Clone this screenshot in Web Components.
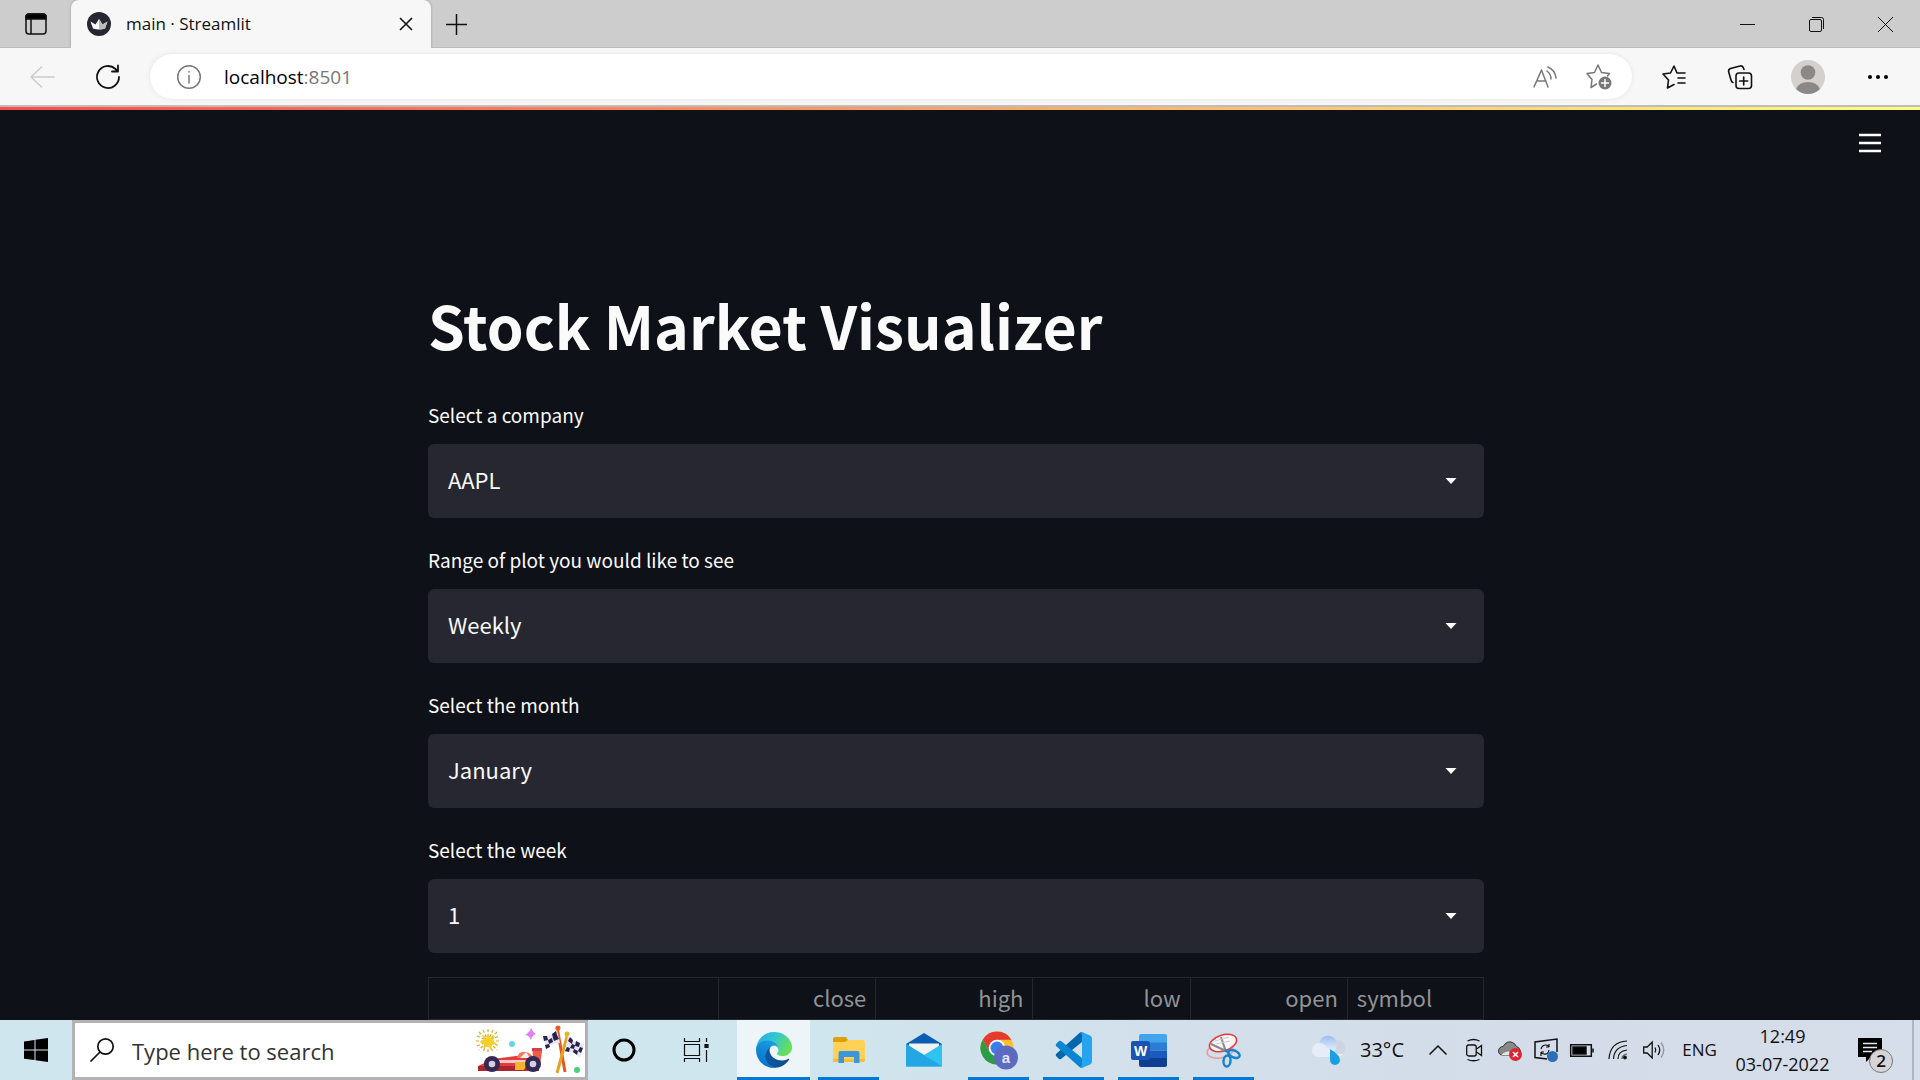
<!DOCTYPE html>
<html lang="en">
<head>
<meta charset="utf-8">
<title>main · Streamlit</title>
<style>
  html, body { margin: 0; height: 100%; }
  body { display: flex; flex-direction: column; overflow: hidden; background: #0e1117; font-family: "Open Sans", "Noto Sans", sans-serif; }
</style>
</head>
<body>
<tab-strip></tab-strip>
<address-toolbar></address-toolbar>
<streamlit-app>
  <h1>Stock Market Visualizer</h1>
  <select-box label="Select a company" options="AAPL,GOOG,MSFT"></select-box>
  <select-box label="Range of plot you would like to see" options="Weekly,Monthly,Yearly"></select-box>
  <select-box label="Select the month" options="January,February,March"></select-box>
  <select-box label="Select the week" options="1,2,3,4"></select-box>
  <price-table></price-table>
</streamlit-app>
<task-bar></task-bar>

<script>
const define = (name, html, setup) => {
  const template = document.createElement('template');
  template.innerHTML = html;
  customElements.define(name, class extends HTMLElement {
    constructor() {
      super();
      this.attachShadow({ mode: 'open' }).append(template.content.cloneNode(true));
    }
    connectedCallback() { if (setup) setup(this, this.shadowRoot); }
  });
};

define('tab-strip', `
<style>
  :host { display: flex; height: 48px; flex: none; background: #cdcdcd; color: #111; box-shadow: inset 0 -1px #bdbdbd; }
  button { border: 0; background: none; padding: 0; color: inherit; display: grid; place-items: center; }
  svg { display: block; fill: none; stroke: currentColor; overflow: visible; }
  svg.solid { stroke: none; }
  .menu { width: 71px; }
  .tab { position: relative; box-sizing: border-box; width: 360px; padding: 0 18px 0 16px; display: flex; align-items: center; gap: 15px; background: #f7f7f7; border-radius: 8px 8px 0 0; box-shadow: 0 0 3px #9a9a9a; clip-path: inset(0 -4px 0 -4px); }
  .title { flex: 1; font-size: 17px; line-height: 24px; }
  .add { width: 50px; }
  .controls { margin-left: auto; display: flex; }
  .controls button { width: 69px; }
</style>
<button class="menu" aria-label="Tab actions"><svg width="22" height="22" viewBox="0 0 22 22" stroke-width="1.5"><rect x="1" y="1" width="20" height="20" rx="3"/><path d="M1 5V4a3 3 0 0 1 3-3h14a3 3 0 0 1 3 3v2H1z" fill="#000"/><path d="M6 6v15"/></svg></button>
<div class="tab">
  <svg class="solid" width="24" height="24" viewBox="0 0 24 24"><circle cx="12" cy="12" r="12" fill="#262730"/><path d="M3.500 9.500l5 3 3.500-5.500 3.500 5.500 5-3-2.500 7q-6 2-12 0z" fill="#fff"/><path d="M12 7l3.500 5.500 5-3-2.500 7q-3 1-6 1z" fill="#bbb"/></svg>
  <span class="title">main · Streamlit</span>
  <button aria-label="Close tab"><svg width="14" height="14" viewBox="0 0 14 14" stroke-width="1.6"><path d="M1 1l12 12M13 1L1 13"/></svg></button>
</div>
<button class="add" aria-label="New tab"><svg width="21" height="21" viewBox="0 0 21 21" stroke-width="1.5"><path d="M10.500 0v21M0 10.500h21"/></svg></button>
<div class="controls">
  <button aria-label="Minimize"><svg width="15" height="15" viewBox="0 0 15 15"><path d="M0 7.500h15"/></svg></button>
  <button aria-label="Restore"><svg width="15" height="15" viewBox="0 0 15 15"><rect x=".5" y="2.500" width="12" height="12" rx="1.500"/><path d="M3 .5h9.500a2 2 0 0 1 2 2V12"/></svg></button>
  <button aria-label="Close"><svg width="15" height="15" viewBox="0 0 15 15"><path d="M0 0l15 15M15 0L0 15"/></svg></button>
</div>`);

define('address-toolbar', `
<style>
  :host { display: flex; align-items: center; height: 57px; flex: none; background: #f7f7f7; border-bottom: 2px solid #bdbdbd; color: #111; }
  button { border: 0; background: none; padding: 0; color: inherit; display: grid; place-items: center; width: 66px; }
  svg { display: block; fill: none; stroke: currentColor; overflow: visible; stroke-linecap: round; stroke-linejoin: round; }
  svg.solid { stroke: none; }
  .nav { display: flex; width: 150px; padding-left: 9px; box-sizing: border-box; }
  .nav button:first-child { color: #ccc; }
  .address { flex: 1; height: 45px; box-sizing: border-box; display: flex; align-items: center; padding: 0 20px 0 27px; border-radius: 23px; background: #fff; box-shadow: 0 0 5px #e3e3e3; color: #777; font-size: 19px; line-height: 26px; }
  .address button { width: 24px; margin-right: 23px; }
  .address .end { width: 26px; margin: 0 0 0 28px; }
  input { border: 0; padding: 0; margin: 0; outline: 0; background: none; font: inherit; color: #000; field-sizing: content; }
  .port { flex: 1; }
  .tools { display: flex; padding: 0 7px 0 9px; }
  .tools .wide { width: 70px; }
</style>
<div class="nav">
  <button aria-label="Back"><svg width="24" height="22" viewBox="0 0 24 22" stroke-width="1.500"><path d="M24 11H1M11.500 1L1 11l10.500 10"/></svg></button>
  <button aria-label="Refresh"><svg width="24" height="24" viewBox="0 0 24 24" stroke-width="1.800"><path d="M23 12a11 11 0 1 1-3.500-8L22 6.500M22 .5v6h-6"/></svg></button>
</div>
<div class="address">
  <button aria-label="Site information"><svg width="24" height="24" viewBox="0 0 24 24" stroke-width="1.500"><circle cx="12" cy="12" r="11.300"/><path d="M12 10.500V18M12 6.500v.5"/></svg></button>
  <input aria-label="Address" value="localhost" size="9"><span class="port">:8501</span>
  <button class="end" aria-label="Read aloud"><svg width="24" height="22" viewBox="0 0 24 22" stroke-width="1.500"><path d="M1 21L8.500 4 15 21M4 15h9M14 5q4 3 4 8M15 1q7 3 8 11"/></svg></button>
  <button class="end" aria-label="Add to favorites"><svg width="26" height="26" viewBox="0 0 26 26" stroke-width="1.500"><path d="M10.500 20L5 23.500l1-8L1 9.500l7.500-1L12 1l3.500 7.500 8 1-2 2.500"/><circle cx="19" cy="19" r="6.500" fill="#777" stroke="none"/><path d="M19 15.500v7M15.500 19h7" stroke="#fff"/></svg></button>
</div>
<div class="tools">
  <button aria-label="Favorites"><svg width="24" height="24" viewBox="0 0 24 24" stroke-width="1.600"><path d="M12 19.500L5.500 23l1-8L1 9l7.500-1L12 1l3 7h8M16 13h7M16 18h7"/></svg></button>
  <button aria-label="Collections"><svg width="24" height="24" viewBox="0 0 24 24" stroke-width="1.600"><rect x="8" y="8" width="15.500" height="15.500" rx="3"/><path d="M15.700 12v8M11.700 16h8M5 17.500Q3.500 17 3 15L.7 7Q0 4.500 2.500 3.500L12 1q2.500-.8 3.500 2l.5 1.500"/></svg></button>
  <button class="wide" aria-label="Profile"><svg class="solid" width="34" height="34" viewBox="0 0 34 34"><circle cx="17" cy="17" r="17" fill="#d3d1ce"/><circle cx="17" cy="12.500" r="7.300" fill="#8c8885"/><path d="M5 29q3-7 12-7t12 7q-5 5-12 5T5 29z" fill="#8c8885"/></svg></button>
  <button class="wide" aria-label="More"><svg class="solid" width="20" height="4" viewBox="0 0 20 4"><g fill="#000"><circle cx="2" cy="2" r="2"/><circle cx="10" cy="2" r="2"/><circle cx="18" cy="2" r="2"/></g></svg></button>
</div>`);

define('streamlit-app', `
<style>
  :host { display: flex; flex-direction: column; flex: 1; min-height: 0; overflow: hidden; background: #0e1117; color: #fafafa; font-family: "Noto Sans CJK JP", "Noto Sans CJK SC", sans-serif; }
  .decoration { height: 3px; flex: none; background: linear-gradient(90deg, #ff4b4b, #fffd80); }
  header { display: flex; justify-content: flex-end; padding: 20px 36px 0 0; height: 170px; flex: none; box-sizing: border-box; }
  button { border: 0; background: none; padding: 0; width: 28px; height: 26px; display: grid; place-items: center; }
  svg { display: block; fill: none; stroke: #fff; stroke-width: 2.500; }
  main { width: 55%; margin: 0 auto; padding-right: 8px; display: flex; flex-direction: column; gap: 24px; }
  ::slotted(h1) { margin: 0 0 3px; font-size: 59px; line-height: 90px; font-weight: 700; }
</style>
<div class="decoration"></div>
<header><button aria-label="Main menu"><svg width="22" height="20" viewBox="0 0 22 20"><path d="M0 2h22M0 10h22M0 18h22"/></svg></button></header>
<main><slot></slot></main>`);

define('select-box', `
<style>
  :host { display: block; padding-top: 3px; }
  label { display: block; font-size: 19px; line-height: 30px; margin-bottom: 14px; }
  .field { display: grid; align-items: center; }
  select, svg { grid-area: 1 / 1; }
  select { appearance: none; width: 100%; height: 74px; padding: 0 20px 4px; border: 0; border-radius: 6px; background: #262730; color: #fafafa; font: inherit; font-size: 22px; }
  svg { justify-self: end; margin-right: 27px; pointer-events: none; fill: #fff; }
</style>
<label for="choice"></label>
<div class="field"><select id="choice"></select><svg width="12" height="6" viewBox="0 0 12 6"><path d="M.5 0h11L6 6z"/></svg></div>`,
(host, root) => {
  root.querySelector('label').textContent = host.getAttribute('label');
  root.querySelector('select').replaceChildren(...host.getAttribute('options').split(',').map(o => new Option(o)));
});

define('price-table', `
<style>
  :host { display: block; }
  table { width: 100%; border-collapse: collapse; table-layout: fixed; font-size: 22px; line-height: 32px; color: #929396; }
  th { font-weight: 400; text-align: right; padding: 3px 9px 6px; border: 1px solid #26272d; }
  th.text { text-align: left; }
  col { width: 14.9%; }
  col.index { width: 27.5%; }
  col.symbol { width: 12.9%; }
</style>
<table>
  <colgroup><col class="index"><col><col><col><col><col class="symbol"></colgroup>
  <thead><tr><th></th><th scope="col">close</th><th scope="col">high</th><th scope="col">low</th><th scope="col">open</th><th scope="col" class="text">symbol</th></tr></thead>
</table>`);

define('task-button', `
<style>
  :host { display: block; width: 73px; }
  button { position: relative; width: 100%; height: 100%; border: 0; padding: 0; background: none; display: grid; place-items: center; }
  :host([active]) button { background: #edf5f9; }
  :host([open]) button::after { content: ""; position: absolute; left: 6px; right: 6px; bottom: 0; height: 3px; background: #0078d7; }
  :host([active]) button::after { left: 0; right: 0; }
</style>
<button><slot></slot></button>`,
(host, root) => root.querySelector('button').setAttribute('aria-label', host.getAttribute('label')));

define('task-bar', `
<style>
  :host { display: flex; height: 60px; flex: none; background: linear-gradient(90deg, #cfe6ee, #cfe6ee 40%, #d2e0ec 60%, #d4dce9 80%, #d6deea); color: #111; font-size: 17px; line-height: 28px; }
  svg { display: block; overflow: visible; }
  .line { fill: none; stroke: #111; stroke-width: 1.500; }
  button { border: 0; background: none; padding: 0; font: inherit; color: inherit; }
  task-button.small { width: 72px; }
  .search { box-sizing: border-box; width: 516px; border: 3px solid #b3b1b3; background: #fff; display: flex; align-items: center; padding: 0 0 0 15px; gap: 18px; }
  .search input { flex: 1; min-width: 0; border: 0; outline: 0; padding: 2px 0 0; background: none; font: inherit; font-size: 22px; }
  .search input::placeholder { color: #333; opacity: 1; }
  .apps { display: flex; gap: 2px; margin-left: 5px; }
  .tray { margin-left: auto; display: flex; }
  .weather { display: flex; align-items: center; gap: 14px; width: 108px; font-size: 20px; }
  .cell { width: 36px; display: grid; place-items: center; }
  .lang { width: 55px; }
  .clock { width: 111px; text-align: center; font-size: 18px; }
  .notes { width: 74px; padding-left: 20px; position: relative; display: grid; align-items: center; }
  .badge { position: absolute; left: 31px; top: 29px; width: 24px; height: 24px; box-sizing: border-box; border: 1px solid #777; border-radius: 50%; background: #d5d5d9; font-size: 17px; line-height: 22px; font-weight: 600; text-align: center; }
  .desktop { width: 8px; box-sizing: border-box; border-left: 2px solid #adb4c2; }
</style>
<task-button class="small" label="Start"><svg width="24" height="24" viewBox="0 0 24 24"><path d="M0 3.500L10.500 2v9.500H0zM11.500 1.800L24 0v11.500H11.500zM0 12.500h10.500V22L0 20.700zM11.500 12.500H24V24l-12.500-1.800z"/></svg></task-button>
<div class="search">
  <svg class="line" width="24" height="24" viewBox="0 0 24 24" style="stroke-width:1.700"><circle cx="15.500" cy="8.500" r="7.700"/><path d="M10 14L.5 23.500"/></svg>
  <input aria-label="Search" placeholder="Type here to search">
  <svg width="108" height="52" viewBox="0 0 108 52">
    <g stroke="#e0a81c" stroke-width="1.200" stroke-dasharray="3 2"><path d="M11 5v24M-1 17h24M2 8l18 18M20 8L2 26M6 6l10 22M16 6L6 28M0 12l22 10M0 22l22-10"/></g>
    <path d="M11 9l2 5 5-2-2 5 4 3-5 1-1 5-3-4-5 3 1-5-5-2 5-2-2-5 5 3z" fill="#f6cf2c"/>
    <path d="M54 4q1.500 4 5 6-4 1-5 6-2-5-6-5 5-3 6-7z" fill="#e27df5"/><circle cx="35" cy="20" r="3" fill="#64d5e8"/>
    <path d="M1 47V42l15-7 23-3h23v15z" fill="#e23c3c"/><path d="M1 42h61v5H1z" fill="#a92630"/><path d="M20 36h36v3H20z" fill="#f8c9ca"/><path d="M38 38h13l-4 8h-9z" fill="#f2b52d"/><path d="M40 34q2-9 12-5l6 5z" fill="#f47763"/><path d="M43 34l6-6 4 6z" fill="#eee"/><path d="M55 24h10v4l-2 12h-6z" fill="#ef5b47"/><path d="M55 24h10v3H55z" fill="#c8434a"/>
    <g fill="#332952"><circle cx="15" cy="40" r="8"/><circle cx="56" cy="40" r="8"/></g><g fill="#d7cfe6"><circle cx="15" cy="40" r="3.300"/><circle cx="56" cy="40" r="3.300"/></g>
    <path d="M80 3l8 45" stroke="#e9551e" stroke-width="3"/><path d="M91 9L80 49" stroke="#dda52b" stroke-width="3"/><circle cx="81" cy="4" r="2.500" fill="#ee5b22"/><circle cx="90" cy="10" r="2.500" fill="#e3b622"/>
    <path d="M66 12q6 2 14-6l3 13q-7-1-14 6z" fill="#e8e6f1"/><path d="M91 11q4 8 16 9l-4 14q-5-7-15-6z" fill="#e8e6f1"/>
    <g fill="#28234e"><path d="M66 12l4 0 1 4-4 1zM75 10l4-3 1 4-4 3zM71 16l4-2 1 4-4 2zM68 21l4-1 1 3-4 2zM80 11l2 4-5 2-1-3zM93 13l3 3-1 4-4-3zM99 17l4 2-1 4-4-1zM95 20l3 1-1 4-4-1zM90 23l3 1-1 4-4-1zM97 25l4 2-1 4-4-3zM103 23l3 1-2 5-3-2z"/></g><circle cx="100" cy="46" r="3" fill="#48d17b"/>
  </svg>
</div>
<task-button class="small" label="Cortana"><svg width="24" height="24" viewBox="0 0 24 24" fill="none" stroke="#000" stroke-width="3"><circle cx="12" cy="12" r="10"/></svg></task-button>
<task-button class="small" label="Task View"><svg class="line" width="24" height="24" viewBox="0 0 24 24" style="stroke-width:1.200"><path d="M.5 0v3.500h15V0M.5 24v-3.500h15V24M.5 6.500h15v11H.5zM22.500 0v4M22.500 12v12"/><path d="M21 6.500h3v3h-3z" fill="#111"/></svg></task-button>
<div class="apps">
  <task-button active open label="Edge"><svg width="36" height="36" viewBox="4.600 4.800 256 256">
    <defs><linearGradient id="e1" x2="1" y2="0"><stop offset="0" stop-color="#0c59a4"/><stop offset="1" stop-color="#114a8b"/></linearGradient><linearGradient id="e2" x1=".6" x2=".2" y2="1"><stop offset="0" stop-color="#1b9de2"/><stop offset="1" stop-color="#0370c9"/></linearGradient><linearGradient id="e3" x2="1" y2=".4"><stop offset="0" stop-color="#2ba9df"/><stop offset=".5" stop-color="#2fc4d8"/><stop offset="1" stop-color="#66df5e"/></linearGradient></defs>
    <path fill="url(#e1)" d="M235.680 195.470a93.730 93.730 0 0 1-10.540 4.710 101.870 101.870 0 0 1-35.900 6.460c-47.320 0-88.540-32.550-88.540-74.320A31.480 31.480 0 0 1 117.130 105c-42.800 1.800-53.800 46.400-53.800 72.530 0 73.880 68.090 81.370 82.760 81.370 7.910 0 19.840-2.300 27-4.560l1.310-.44a128.340 128.340 0 0 0 66.600-52.800 4 4 0 0 0-5.320-5.630z"/>
    <path fill="url(#e2)" d="M110.340 246.340A79.200 79.200 0 0 1 87.600 225a80.720 80.720 0 0 1 29.530-120c3.120-1.470 8.450-4.130 15.540-4a32.350 32.350 0 0 1 25.690 13 31.880 31.880 0 0 1 6.360 18.660c0-.21 24.460-79.600-80-79.600-43.900 0-80 41.660-80 78.210a130.150 130.150 0 0 0 12.110 56 128 128 0 0 0 156.380 67.110 75.550 75.550 0 0 1-62.780-8z"/>
    <path fill="url(#e3)" d="M156.940 153.780c-.81 1.050-3.300 2.500-3.300 5.660 0 2.610 1.700 5.120 4.720 7.230 14.380 10 41.490 8.680 41.560 8.680a59.560 59.560 0 0 0 30.270-8.350A61.380 61.380 0 0 0 260.600 114c.26-22.410-8-37.310-11.340-43.910-21.190-41.450-66.930-65.290-116.670-65.290a128 128 0 0 0-128 126.200c.48-36.540 36.800-66.050 80-66.050 3.500 0 23.460.34 42 10.070 16.340 8.580 24.900 18.940 30.850 29.210 6.180 10.670 7.280 24.150 7.280 29.520s-2.740 13.330-7.800 20.030z"/></svg></task-button>
  <task-button open label="File Explorer"><svg width="32" height="26" viewBox="0 0 32 26"><path d="M0 2q0-2 2-2h11l2 3v5H0z" fill="#dfa006"/><path d="M0 5h12l3-2h16l1 2v18q0 2-2 2H0z" fill="#ffd257"/><path d="M0 22h32v1q0 2-2 2H0z" fill="#f6be35"/><path d="M5.500 26V16q0-2 2-2h17q2 0 2 2v10H21v-6H11v6z" fill="#3a96dd"/></svg></task-button>
  <task-button label="Mail"><svg width="36" height="34" viewBox="0 0 36 34"><path d="M0 11L18 0l18 11v4H0z" fill="#0a5fb4"/><path d="M3 10.500h30v12H3z" fill="#f3f3f3"/><path d="M0 11l18 11 18-11v22.500H0z" fill="#2fc3f2"/><path d="M0 11l18 11 18 11.500H0z" fill="#24a5e4"/></svg></task-button>
  <task-button open label="Chrome"><svg width="38" height="38" viewBox="0 0 38 38"><circle cx="17" cy="17" r="16.500" fill="#fbc02d"/><path d="M2.700 8.700A16.500 16.500 0 0 1 31.300 8.700H17l-7 12.500z" fill="#e53b2f"/><path d="M2.700 8.700A16.500 16.500 0 0 0 17 33.500l7-12.500H10z" fill="#2a9d48"/><circle cx="17" cy="17" r="8.300" fill="#fff"/><circle cx="17" cy="17" r="6.500" fill="#3b7ded"/><circle cx="26" cy="26.500" r="12" fill="#5c6bc0"/><text x="26" y="32" font-size="15" font-weight="600" text-anchor="middle" fill="#e2e5f5">a</text></svg></task-button>
  <task-button open label="Visual Studio Code"><svg width="36" height="36" viewBox="0 0 36 36"><path d="M26 0v10L5 27q-1 .5-2 0l-3-3q-.5-1 0-2L24 .5z" fill="#0067ad"/><path d="M26 36V26L5 9q-1-.5-2 0L0 12q-.5 1 0 2l24 21.500z" fill="#0a85d1"/><path d="M26 0l8 3.500q2 1 2 3v23q0 2-2 3L26 36q-1 0-2-1 2 0 2-2V3q0-2-2-2z" fill="#25a5f0"/></svg></task-button>
  <task-button open label="Word"><svg width="36" height="33" viewBox="0 0 36 33"><path d="M10 0h24q2 0 2 2v7H8V2q0-2 2-2z" fill="#41a5ee"/><path d="M8 8.500h28v8H8z" fill="#2b7cd3"/><path d="M8 16.500h28v8H8z" fill="#185abd"/><path d="M8 24h28v7q0 2-2 2H10q-2 0-2-2z" fill="#103f91"/><rect y="7" width="19" height="19" rx="2" fill="#1a53b4"/><text x="9.500" y="22" font-size="14" font-weight="700" text-anchor="middle" fill="#fff">W</text></svg></task-button>
  <task-button open label="Snipping Tool"><svg width="36" height="36" viewBox="0 0 36 36" fill="none"><ellipse cx="14" cy="19" rx="13" ry="7" stroke="#e99aa2" stroke-width="1.500" transform="rotate(-8 14 19)"/><ellipse cx="17" cy="11" rx="14" ry="8" fill="#f8f6f8" stroke="#e53a3e" stroke-width="1.600" transform="rotate(-18 17 11)"/><path d="M15 5l5 15M5 12l15 7" stroke="#85898d" stroke-width="2"/><path d="M9 9l14-4M10 12l14-3" stroke="#ccc"/><g stroke="#1683cd" stroke-width="2.400"><ellipse cx="28" cy="22" rx="6" ry="3.500" transform="rotate(25 28 22)"/><ellipse cx="21" cy="29" rx="3.500" ry="5.500" transform="rotate(5 21 29)"/><path d="M19 18l4 3"/></g></svg></task-button>
</div>
<div class="tray">
  <button class="weather" aria-label="Weather 33°C"><svg width="34" height="30" viewBox="0 0 34 30"><defs><linearGradient id="w" x2="0" y2="1"><stop offset="0" stop-color="#9dbcf0"/><stop offset="1" stop-color="#f4f6fb"/></linearGradient></defs><circle cx="25" cy="13" r="8" fill="#cdd5e3"/><circle cx="16" cy="9.500" r="9" fill="url(#w)"/><path d="M7 8a7 7 0 1 0 0 14h18a8 8 0 0 0 6-3q-14 1-17-8-3-3-7-3z" fill="#e6edf9"/><path d="M18 14q10 6 10 11a5 5 0 0 1-10 0z" fill="#1c9ee2"/></svg><span>33°C</span></button>
  <button class="cell" aria-label="Show hidden icons"><svg class="line" width="18" height="10" viewBox="0 0 18 10"><path d="M.5 9.500L9 1l8.500 8.500"/></svg></button>
  <button class="cell" aria-label="Meet Now"><svg class="line" width="16" height="22" viewBox="0 0 16 22" style="stroke-width:1.300"><rect x=".7" y="6" width="9.500" height="11" rx="2"/><path d="M10.500 10l5-3.500v10l-5-3.500M1.500 2q6-3 12 0M1.500 20.500q6 2.500 12 0"/></svg></button>
  <button class="cell" aria-label="OneDrive"><svg width="24" height="21" viewBox="0 0 24 21"><path d="M5 15.500a4.500 4.500 0 0 1 0-9Q9 0 14.500 2.500q3 1.500 4 4 3.500 1 4 5l-4 4z" fill="#888" stroke="#333"/><path d="M3 15.500q3-4 8-4l6 4z" fill="#e5e5e5"/><circle cx="17.500" cy="14.500" r="6.500" fill="#dc2430"/><path d="M15 12l5 5M20 12l-5 5" stroke="#fff" stroke-width="1.500"/></svg></button>
  <button class="cell" aria-label="Windows Update"><svg class="line" width="24" height="24" viewBox="0 0 24 24"><path d="M13 21L1 19.500V4L23 1v13"/><path d="M7 11q1-4 5-4 2 0 3 2V6M15 9h-3M15 12q-1 5-5 4-2 0-3-2v4M7 14h3" style="stroke-width:1.200"/><circle cx="18.500" cy="18.500" r="5.500" fill="#2b6fb8" stroke="none"/></svg></button>
  <button class="cell" aria-label="Battery"><svg class="line" width="24" height="13" viewBox="0 0 24 13"><path d="M.7.700h20.600v11.600H.7zM23 4.500v4"/><path d="M3 3h13v7H3z" fill="#000"/></svg></button>
  <button class="cell" aria-label="Network"><svg class="line" width="20" height="20" viewBox="0 0 20 20" style="stroke-width:1.200"><path d="M1 19Q2 2 19 1M5.500 19Q6 7 19 5.500M10 19q0-8 9-9"/><path d="M14 19q0-4 5-5" opacity=".7"/><circle cx="17" cy="17.500" r="1.300" fill="#000"/></svg></button>
  <button class="cell" aria-label="Volume"><svg class="line" width="22" height="18" viewBox="0 0 22 18" style="stroke-width:1.300"><path d="M.7 6v6h3.500l5 5V1l-5 5zM12 6.500q1.500 2.500 0 5M15 4q3.500 5 0 10"/><path d="M18 1.500q5.500 7.500 0 15" opacity=".35"/></svg></button>
  <button class="lang">ENG</button>
  <button class="clock">12:49<br>03-07-2022</button>
  <button class="notes" aria-label="2 notifications"><svg width="24" height="24" viewBox="0 0 24 24"><path d="M0 0h24v19H13l-5 5v-5H0z"/><path d="M5 5.500h14M5 9.500h14M5 13.500h9" stroke="#e5e8ef" stroke-width="1.300"/></svg><span class="badge">2</span></button>
  <button class="desktop" aria-label="Show desktop"></button>
</div>`);
</script>
</body>
</html>
